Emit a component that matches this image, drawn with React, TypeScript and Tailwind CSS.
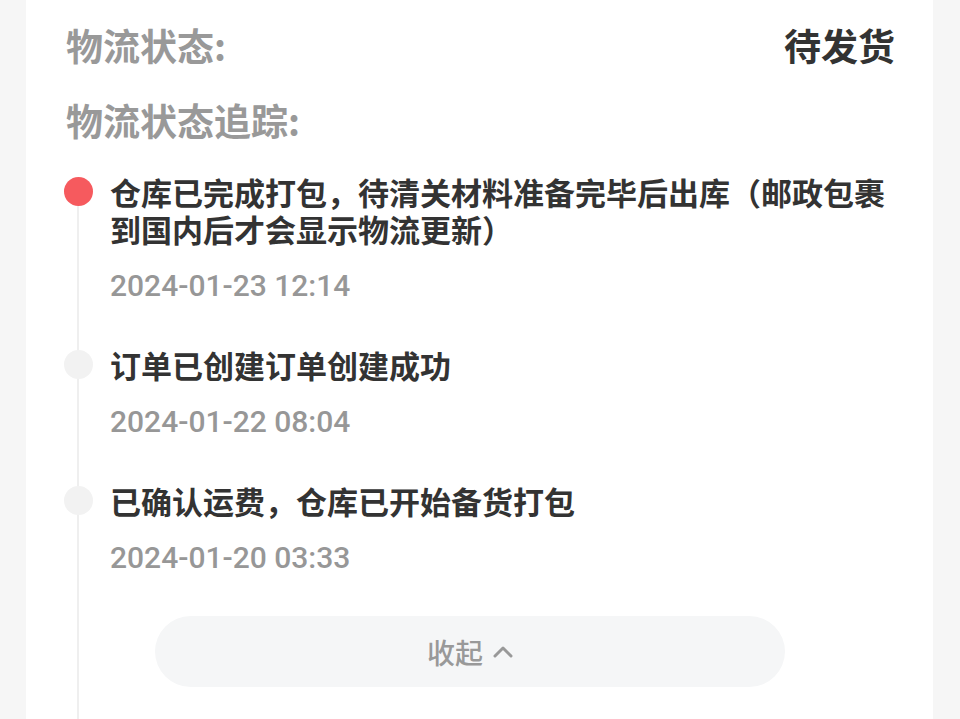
import React from 'react';

interface TrackItem {
  title: string;
  time: string;
  active?: boolean;
}

const items: TrackItem[] = [
  {
    title: '仓库已完成打包，待清关材料准备完毕后出库（邮政包裹到国内后才会显示物流更新）',
    time: '2024-01-23 12:14',
    active: true,
  },
  { title: '订单已创建订单创建成功', time: '2024-01-22 08:04' },
  { title: '已确认运费，仓库已开始备货打包', time: '2024-01-20 03:33' },
];

const cjk = { fontFamily: '"Noto Sans CJK SC", "Noto Sans", sans-serif' };
const num = { fontFamily: 'Roboto, "Noto Sans CJK SC", sans-serif' };

export default function App() {
  return (
    <div className="h-[719px] overflow-hidden bg-[#f6f6f6] px-[26px]" style={cjk}>
      <div className="bg-white h-full w-[907px] pt-[21px] pl-[40px] pr-[38px]">
        {/* status */}
        <div className="flex items-center justify-between h-[50px]">
          <span className="text-[37px] font-bold text-[#999999]">物流状态:</span>
          <span className="text-[37px] font-bold text-[#333333]">待发货</span>
        </div>
        <div className="flex items-center h-[50px] mt-[25px]">
          <span className="text-[37px] font-bold text-[#999999]">物流状态追踪:</span>
        </div>

        {/* timeline */}
        <div className="relative mt-[27px] -ml-[2px]">
          <div className="absolute left-[13px] top-[18px] -bottom-[40px] w-[2px] bg-[#efefef]" />
          <div className="flex flex-col gap-[42px]">
            {items.map((it) => (
              <div key={it.time} className="relative flex items-start gap-[17px]">
                <div className="h-[37px] flex items-center shrink-0">
                  <span
                    className={
                      it.active
                        ? 'block w-[29px] h-[29px] rounded-full bg-[#f65a5e]'
                        : 'block w-[29px] h-[29px] rounded-full bg-[#f2f2f2]'
                    }
                  />
                </div>
                <div className="flex-1 flex flex-col">
                  <p className="text-[31px] leading-[37px] font-bold text-[#333333]">{it.title}</p>
                  <p className="mt-[20px] text-[30px] leading-[37px] font-medium text-[#979797]" style={num}>
                    {it.time}
                  </p>
                </div>
              </div>
            ))}
          </div>
          <div className="pl-[91px] pt-[40px]">
            <button className="w-[630px] h-[71px] rounded-full bg-[#f5f6f7] flex items-center justify-center gap-[10px] text-[28px] text-[#999999] font-medium">
              <span>收起</span>
              <svg width="20" height="14" viewBox="0 0 20 14" fill="none">
                <path d="M2 11 L10 3 L18 11" stroke="#999999" strokeWidth="3" strokeLinecap="round" strokeLinejoin="round" />
              </svg>
            </button>
          </div>
        </div>
      </div>
    </div>
  );
}
